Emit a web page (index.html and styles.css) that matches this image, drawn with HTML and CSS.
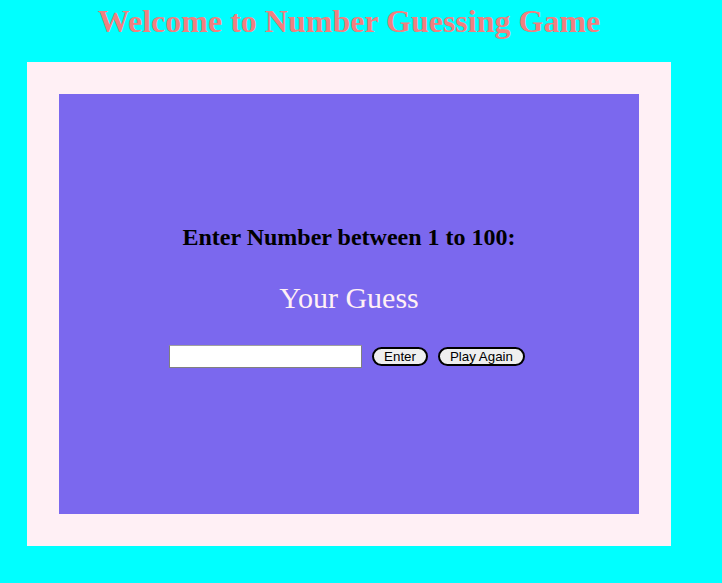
FILE: index.html
```html
<!DOCTYPE html>
<html>
<head>
<meta charset="utf-8">
<link rel="stylesheet" href="styles.css">
</head>
<body>
<div class="page">
  <h1 class="title">Welcome to Number Guessing Game</h1>
  <div class="box">
    <div class="panel">
      <h2 class="prompt">Enter Number between 1 to 100:</h2>
      <p class="guess">Your Guess</p>
      <div class="controls">
        <input class="field" type="text">
        <button class="btn">Enter</button>
        <button class="btn">Play Again</button>
      </div>
    </div>
  </div>
</div>
</body>
</html>
```
FILE: styles.css
```css
html, body {
  margin: 0;
  padding: 0;
  background: #00ffff;
}
.page {
  width: 644px;
  margin-left: 27px;
}
.title {
  margin: 3px 0 0 0;
  height: 59px;
  text-align: center;
  font-family: "Liberation Serif", serif;
  font-weight: bold;
  font-size: 32px;
  color: #f08080;
}
.box {
  background: #fff0f5;
  padding: 32px;
}
.panel {
  height: 420px;
  box-sizing: border-box;
  padding-top: 130px;
  background: #7b68ee;
  display: flex;
  flex-direction: column;
  align-items: center;
}
.prompt {
  margin: 0;
  font-family: "Liberation Serif", serif;
  font-weight: bold;
  font-size: 24px;
  color: #000;
}
.guess {
  margin: 30px 0 0 0;
  font-family: "Liberation Serif", serif;
  font-size: 30px;
  color: #fff0f5;
}
.controls {
  margin-top: 30px;
  padding-right: 4px;
  display: flex;
  align-items: center;
  gap: 10px;
}
.field {
  width: 193px;
  height: 23px;
  box-sizing: border-box;
  border: 1px solid #808080;
  border-top-color: #a0a0a0;
  border-radius: 0;
  background: #fff;
  margin: 0;
}
.btn {
  font-family: "Liberation Sans", Arial, sans-serif;
  font-size: 13.33px;
  color: #000;
  background: #efefef;
  border: 2px solid #000;
  border-radius: 10px;
  height: 19px;
  padding: 0 10px;
  line-height: 15px;
  margin: 0;
}
```
